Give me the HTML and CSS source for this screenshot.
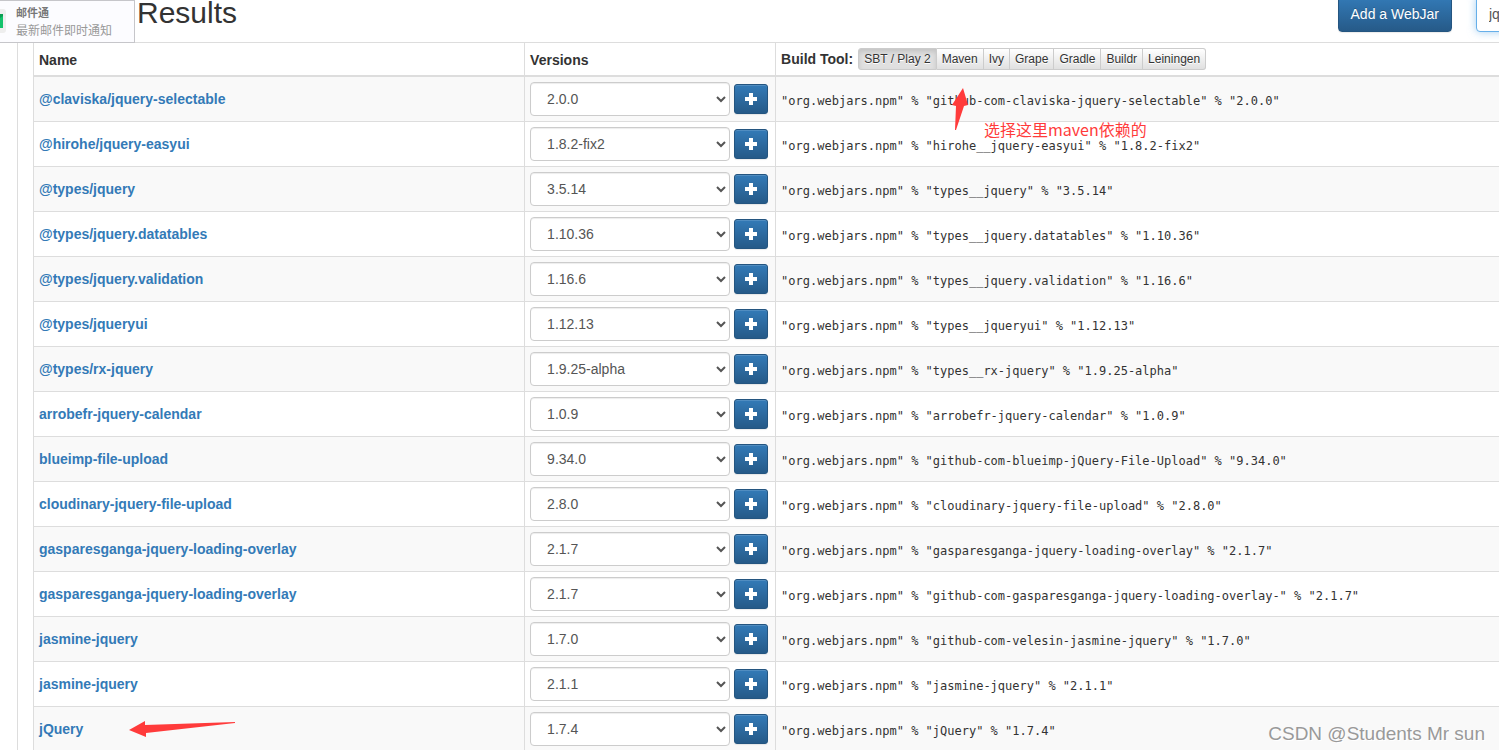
FILE: index.html
```
<!doctype html>
<html lang="en">
    <head>
        <meta charset="utf-8">
        <title>WebJars - Results</title>
        <link rel="stylesheet" href="styles.css">
    </head>
    <body>
        <header class="header">
            <h2>Results</h2>
            <button type="button" class="btn btn-primary">Add a WebJar</button>
            <input class="search" type="text" value="jquery" aria-label="Search WebJars">
        </header>

        <main class="container">
            <table class="webjars">
                <thead>
                    <tr>
                        <th class="name">Name</th>
                        <th class="versions">Versions</th>
                        <th class="build">
                            <div class="tools">
                                <span>Build Tool:</span>
                                <div class="btn-group">
                                    <button type="button" class="active">SBT / Play 2</button>
                                    <button type="button">Maven</button>
                                    <button type="button">Ivy</button>
                                    <button type="button">Grape</button>
                                    <button type="button">Gradle</button>
                                    <button type="button">Buildr</button>
                                    <button type="button">Leiningen</button>
                                </div>
                            </div>
                        </th>
                    </tr>
                </thead>
                <tbody id="results"></tbody>
            </table>
        </main>

        <aside class="notice">
            <svg class="notice-icon" width="6" height="24" viewBox="0 0 6 24">
                <path d="M0 0h3q3 0 3 3v18q0 3-3 3H0z" fill="#eee"/>
                <path d="M0 5h3v14H0z" fill="#13c26b"/>
                <path d="M0 5h3v2L0 9z" fill="#0a9d52"/>
            </svg>
            <div>
                <b>邮件通</b>
                <p>最新邮件即时通知</p>
            </div>
        </aside>

        <svg class="arrow arrow-up" width="20" height="44" viewBox="0 0 20 44">
            <path d="M12 1L1 18l4 1-1 24h1l8-24 4-1z" fill="#ff3b3b"/>
        </svg>
        <p class="hint">选择这里maven依赖的</p>
        <svg class="arrow arrow-left" width="108" height="18" viewBox="0 0 108 18">
            <path d="M0 10L16 1v4l90-3v1L17 13v4z" fill="#ff3b3b"/>
        </svg>
        <p class="watermark">CSDN @Students Mr sun</p>

        <script src="results.js"></script>
    </body>
</html>
```

FILE: styles.css
```
* {
    box-sizing: border-box;
}
body {
    margin: 0;
    height: 100vh;
    overflow: hidden;
    position: relative;
    font-family: "Liberation Sans", "Noto Sans CJK SC", sans-serif;
    font-size: 14px;
    line-height: 20px;
    color: #333;
    background-color: #fff;
}
h2, p {
    margin: 0;
}
a {
    color: #337ab7;
    font-weight: bold;
    text-decoration: none;
}
a:hover {
    text-decoration: underline;
}
button, input, select {
    font-family: inherit;
    font-size: 14px;
}

.header {
    display: flex;
    align-items: flex-start;
    height: 42px;
    padding-left: 137px;
}
.header h2 {
    flex-grow: 1;
    font-size: 30px;
    font-weight: normal;
    line-height: 26px;
}
.header .btn, .header .search {
    height: 36px;
    margin-top: -4px;
}
.btn {
    padding: 0 12px;
    border: 1px solid #245580;
    border-radius: 4px;
    color: #fff;
}
.btn-primary {
    background-image: linear-gradient(#337ab7, #265a88);
    text-shadow: 0 -1px 0 rgba(0, 0, 0, 0.2);
    box-shadow: inset 0 1px 0 rgba(255, 255, 255, 0.15), 0 1px 1px rgba(0, 0, 0, 0.08);
}
.search {
    width: 200px;
    margin-left: 24px;
    margin-right: -177px;
    padding: 0 12px;
    border: 1px solid #66afe9;
    border-radius: 4px;
    color: #555;
    box-shadow: 0 0 8px rgba(102, 175, 233, 0.6);
}

.container {
    margin-left: 17px;
    margin-right: -1px;
    padding-left: 15px;
    border-left: 1px solid #ddd;
}
.webjars {
    width: 100%;
    border-collapse: collapse;
}
.webjars th, .webjars td {
    padding: 5px;
    border: 1px solid #ddd;
    text-align: left;
}
.webjars th {
    height: 33px;
    padding: 3px 5px 0;
    border-bottom-width: 2px;
}
.webjars .name {
    width: 33.5%;
}
.webjars .versions {
    width: 251px;
}
.webjars .build {
    padding-top: 0;
}
.webjars tbody tr:nth-child(odd) {
    background-color: #f9f9f9;
}
.tools {
    display: flex;
    align-items: center;
    gap: 5px;
}
.btn-group {
    display: flex;
}
.btn-group button {
    height: 22px;
    padding: 0 5px;
    border: 1px solid #ccc;
    border-left-width: 0;
    font-size: 12px;
    color: #333;
    background-image: linear-gradient(#fff, #e0e0e0);
    text-shadow: 0 1px 0 #fff;
}
.btn-group button:first-child {
    border-left-width: 1px;
    border-radius: 3px 0 0 3px;
}
.btn-group button:last-child {
    border-radius: 0 3px 3px 0;
}
.btn-group .active {
    background-color: #e0e0e0;
    background-image: none;
    box-shadow: inset 0 3px 5px rgba(0, 0, 0, 0.125);
}
.version {
    display: flex;
    align-items: center;
    gap: 4px;
}
.version select {
    width: 200px;
    height: 34px;
    padding: 6px 0 6px 12px;
    border: 1px solid #ccc;
    border-radius: 4px;
    color: #555;
    background-color: #fff;
    box-shadow: inset 0 1px 1px rgba(0, 0, 0, 0.075);
}
.version .add {
    display: flex;
    align-items: center;
    justify-content: center;
    width: 34px;
    height: 30px;
    padding: 0;
    border-radius: 3px;
}
.webjars code {
    display: block;
    padding-top: 4px;
    font-family: "DejaVu Sans Mono", monospace;
    font-size: 12px;
    white-space: nowrap;
}

.notice {
    position: absolute;
    top: 0;
    left: 0;
    display: flex;
    gap: 10px;
    width: 135px;
    height: 43px;
    padding-top: 3px;
    border: 1px solid #c6c6ca;
    border-left: 0;
    background-color: #fcfcff;
    font-family: "Noto Sans CJK SC", sans-serif;
    font-size: 12px;
    line-height: 20px;
    color: #999;
    white-space: nowrap;
}
.notice b {
    display: block;
    font-size: 11px;
    line-height: 16px;
    color: #777;
}
.notice-icon {
    margin-top: 5px;
}
.arrow {
    position: absolute;
}
.arrow-up {
    left: 951px;
    top: 87px;
}
.arrow-left {
    left: 129px;
    top: 720px;
}
.hint {
    position: absolute;
    left: 984px;
    top: 119px;
    font-family: "Noto Sans CJK SC", sans-serif;
    font-size: 16px;
    color: #ff3b3b;
}
.watermark {
    position: absolute;
    right: 14px;
    bottom: 6px;
    font-size: 19px;
    color: #999;
    text-shadow: 1px 1px 0 #fff;
}
```

FILE: results.js
```
const webjars = [
    ['@claviska/jquery-selectable', '2.0.0', 'github-com-claviska-jquery-selectable'],
    ['@hirohe/jquery-easyui', '1.8.2-fix2', 'hirohe__jquery-easyui'],
    ['@types/jquery', '3.5.14', 'types__jquery'],
    ['@types/jquery.datatables', '1.10.36', 'types__jquery.datatables'],
    ['@types/jquery.validation', '1.16.6', 'types__jquery.validation'],
    ['@types/jqueryui', '1.12.13', 'types__jqueryui'],
    ['@types/rx-jquery', '1.9.25-alpha', 'types__rx-jquery'],
    ['arrobefr-jquery-calendar', '1.0.9', 'arrobefr-jquery-calendar'],
    ['blueimp-file-upload', '9.34.0', 'github-com-blueimp-jQuery-File-Upload'],
    ['cloudinary-jquery-file-upload', '2.8.0', 'cloudinary-jquery-file-upload'],
    ['gasparesganga-jquery-loading-overlay', '2.1.7', 'gasparesganga-jquery-loading-overlay'],
    ['gasparesganga-jquery-loading-overlay', '2.1.7', 'github-com-gasparesganga-jquery-loading-overlay-'],
    ['jasmine-jquery', '1.7.0', 'github-com-velesin-jasmine-jquery'],
    ['jasmine-jquery', '2.1.1', 'jasmine-jquery'],
    ['jQuery', '1.7.4', 'jQuery']
];

document.getElementById('results').innerHTML = webjars.map(([name, version, artifact]) => `
    <tr>
        <td><a href="#">${name}</a></td>
        <td>
            <div class="version">
                <select aria-label="Version of ${name}"><option>${version}</option></select>
                <button type="button" class="btn btn-primary add" aria-label="Add ${name}">
                    <svg width="12" height="12" viewBox="0 0 12 12"><path d="M4 0h4v4h4v4H8v4H4V8H0V4h4z" fill="#fff"/></svg>
                </button>
            </div>
        </td>
        <td><code>"org.webjars.npm" % "${artifact}" % "${version}"</code></td>
    </tr>`).join('');
```
